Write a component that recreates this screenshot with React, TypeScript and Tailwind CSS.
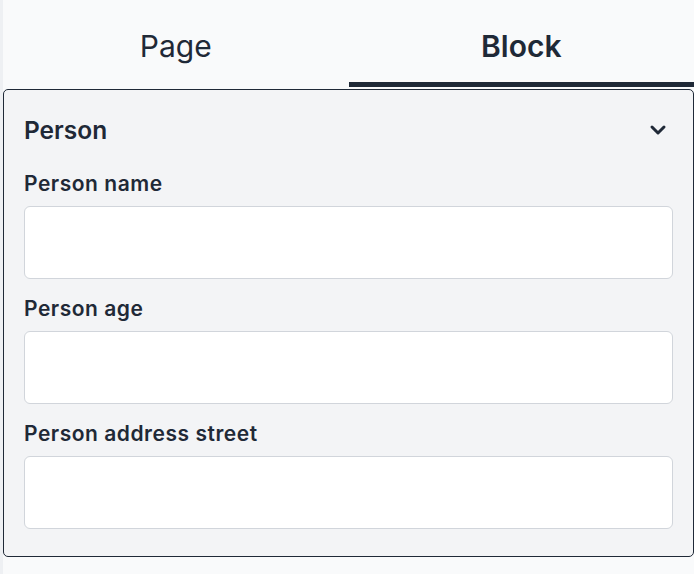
import { ChevronDown } from 'lucide-react';

const fields = ['Person name', 'Person age', 'Person address street'];

export default function App() {
  return (
    <div
      className="flex min-h-[574px] w-[694px] bg-[#f9fafb] text-[#1f2937]"
      style={{ fontFamily: 'Inter, "Noto Sans", sans-serif' }}
    >
      <div className="w-[3px] shrink-0 bg-[#eef0f3]" />
      <div className="flex flex-1 flex-col">
        {/* Tabs */}
        <div className="flex h-[87px]">
          <button className="flex h-[87px] flex-1 items-center justify-center border-b-[5px] border-transparent pt-[10px] text-[30px] font-normal">
            Page
          </button>
          <button className="flex h-[87px] flex-1 items-center justify-center border-b-[5px] border-[#1f2937] pt-[10px] text-[30px] font-semibold">
            Block
          </button>
        </div>

        {/* Panel */}
        <div className="mt-[2px] rounded-[5px] border border-[#1f2937] bg-[#f3f4f6] px-5 pb-[27px] pt-6">
          <div className="mb-[24px] flex h-8 items-center justify-between">
            <h2 className="text-[24.5px] font-semibold leading-8">Person</h2>
            <ChevronDown size={24} strokeWidth={3} className="mr-[3px]" />
          </div>

          <div className="flex flex-col gap-4">
            {fields.map(label => (
              <div key={label} className="flex flex-col">
                <label className="mb-2 text-[21px] font-semibold leading-7 tracking-[0.025em]">
                  {label}
                </label>
                <input
                  type="text"
                  className="h-[73px] w-full rounded-md border border-[#d1d5db] bg-white px-3 outline-none"
                />
              </div>
            ))}
          </div>
        </div>
      </div>
    </div>
  );
}
